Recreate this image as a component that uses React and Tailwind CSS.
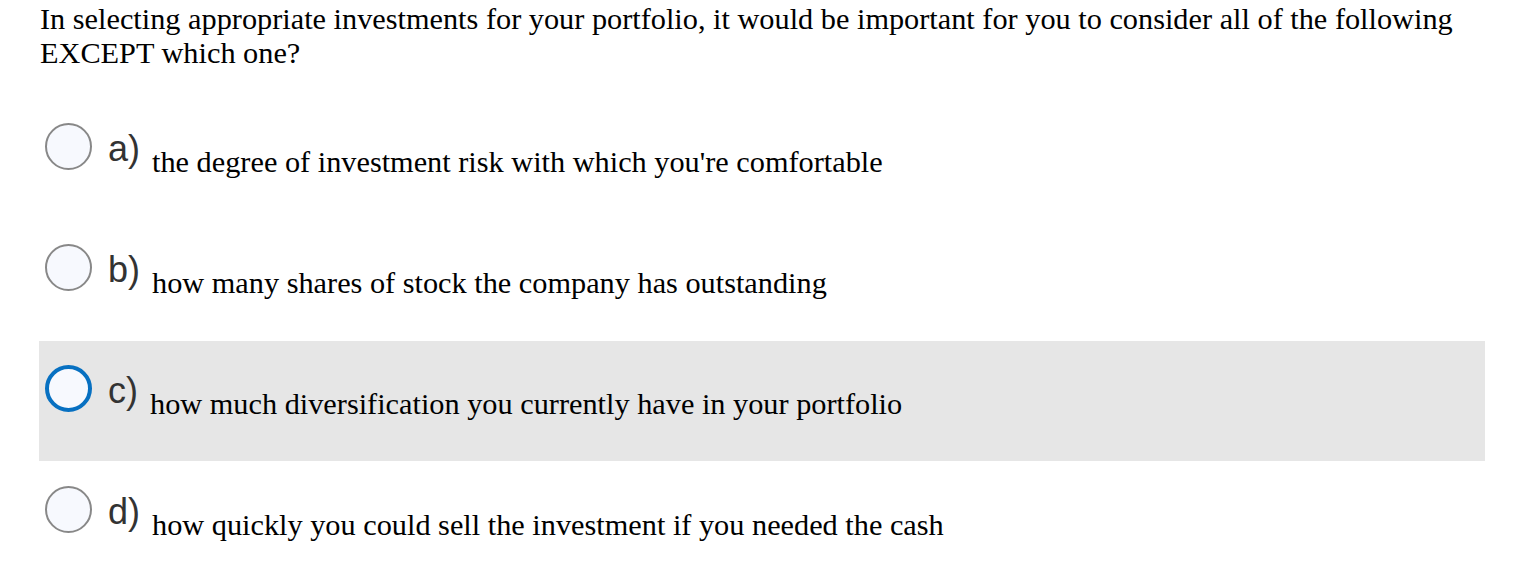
export default function App() {
  const options = [
    { l: "a)", t: "the degree of investment risk with which you're comfortable" },
    { l: "b)", t: "how many shares of stock the company has outstanding" },
    { l: "c)", t: "how much diversification you currently have in your portfolio", sel: true },
    { l: "d)", t: "how quickly you could sell the investment if you needed the cash" },
  ];
  return (
    <div className="w-[1514px] h-[586px] bg-white pl-[39px] pr-[29px] overflow-hidden">
      <p className="pl-[1px] pt-[2px] text-[30.3px] leading-[34px] text-black whitespace-nowrap" style={{ fontFamily: '"Liberation Serif", "Times New Roman", serif' }}>
        In selecting appropriate investments for your portfolio, it would be important for you to consider all of the following
        <br />
        EXCEPT which one?
      </p>
      <div className="mt-[29px] flex flex-col gap-[1px]">
        {options.map((o) => (
          <div key={o.l} className={"h-[120px] flex items-start " + (o.sel ? "bg-[#e6e6e6]" : "")}>
            <div
              className={
                "ml-[6px] mt-[24px] w-[47px] h-[47px] rounded-full bg-[#f7f9fe] shrink-0 " +
                (o.sel ? "border-[4px] border-[#0770c1]" : "border-[2px] border-[#888888]")
              }
            />
            <div className="ml-[16px] mt-[32px] text-[36px] leading-[36px] text-[#333333]" style={{ fontFamily: '"Liberation Sans", Arial, sans-serif' }}>
              {o.l}
            </div>
            <div className="ml-[12px] mt-[48px] text-[30.3px] leading-[30px] text-black whitespace-nowrap" style={{ fontFamily: '"Liberation Serif", "Times New Roman", serif' }}>
              {o.t}
            </div>
          </div>
        ))}
      </div>
    </div>
  );
}
